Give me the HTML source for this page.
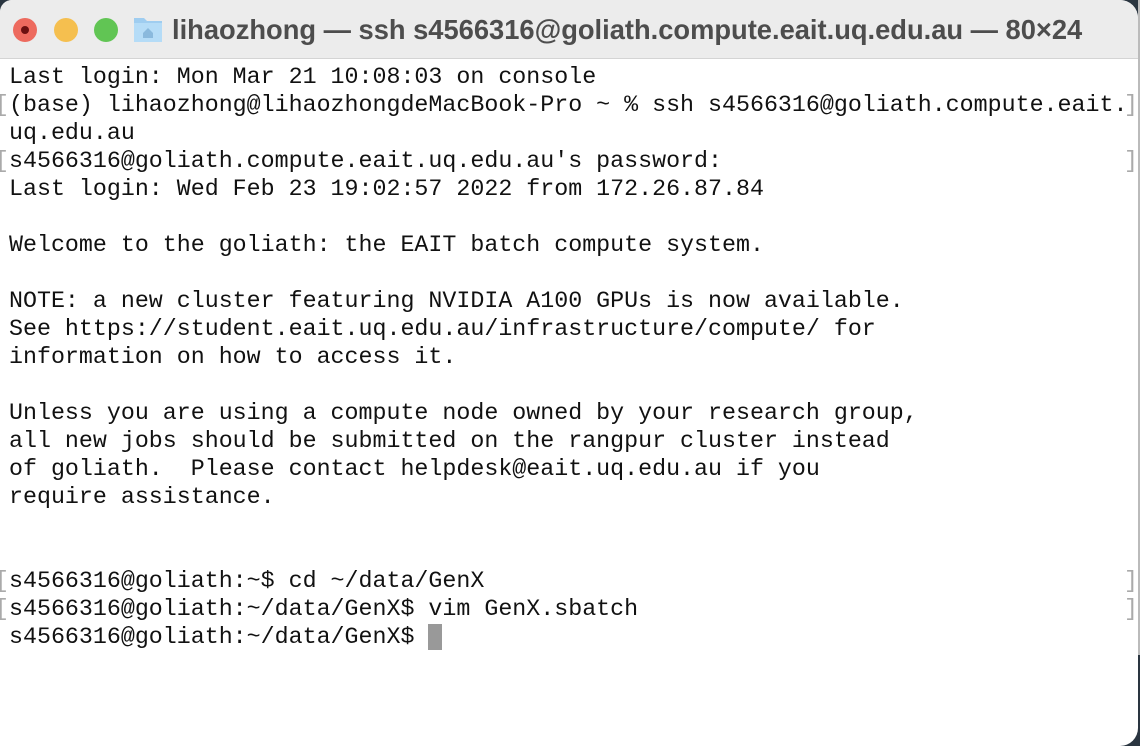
<!DOCTYPE html>
<html><head><style>
html,body{margin:0;width:1140px;height:746px;overflow:hidden;background:#2a3540;}
.win{position:absolute;left:0;top:0;width:1138px;height:746px;background:#fff;border-radius:12px 18px 18px 0;overflow:hidden;}
.bar{position:absolute;left:0;top:0;right:0;height:58px;background:#ececec;border-bottom:1px solid #d4d4d4;}
.dot{position:absolute;top:18px;width:24px;height:24px;border-radius:50%;}
.title{position:absolute;left:172px;top:14px;font:bold 27.3px "Liberation Sans",sans-serif;color:#4d4d4d;white-space:nowrap;}
pre{position:absolute;left:9px;top:63px;margin:0;font:23.3px/28px "Liberation Mono",monospace;color:#111;}
.br{position:absolute;font:23.3px/28px "Liberation Mono",monospace;color:#aaa;}
.cur{position:absolute;left:428px;top:624px;width:14px;height:26px;background:#999;}
.sb{position:absolute;left:1138px;top:0;width:2px;height:655px;background:#bbb;}
</style></head><body>
<div class="sb"></div>
<div class="win">
<div class="bar">
<div class="dot" style="left:13px;background:#ed6a5e;border:0"><div style="position:absolute;left:8px;top:8px;width:8px;height:8px;border-radius:50%;background:#6b1010"></div></div>
<div class="dot" style="left:54px;background:#f5bf4f"></div>
<div class="dot" style="left:94px;background:#61c554"></div>
<svg style="position:absolute;left:133px;top:15px" width="30" height="28" viewBox="0 0 30 28"><path d="M1 3h10l3 3h15v21H1z" fill="#9fcdf0"/><path d="M1 8h28v19H1z" fill="#b5dcf7"/><path d="M10 18l5-5 5 5v5h-10z" fill="#8ab9dd"/></svg>
<div class="title">lihaozhong — ssh s4566316@goliath.compute.eait.uq.edu.au — 80×24</div>
</div>
<pre>Last login: Mon Mar 21 10:08:03 on console
(base) lihaozhong@lihaozhongdeMacBook-Pro ~ % ssh s4566316@goliath.compute.eait.
uq.edu.au
s4566316@goliath.compute.eait.uq.edu.au's password:
Last login: Wed Feb 23 19:02:57 2022 from 172.26.87.84

Welcome to the goliath: the EAIT batch compute system.

NOTE: a new cluster featuring NVIDIA A100 GPUs is now available.
See https://student.eait.uq.edu.au/infrastructure/compute/ for
information on how to access it.

Unless you are using a compute node owned by your research group,
all new jobs should be submitted on the rangpur cluster instead
of goliath.  Please contact helpdesk@eait.uq.edu.au if you
require assistance.


s4566316@goliath:~$ cd ~/data/GenX
s4566316@goliath:~/data/GenX$ vim GenX.sbatch
s4566316@goliath:~/data/GenX$ </pre>
<div class="br" style="left:-5px;top:91px">[</div>
<div class="br" style="left:-5px;top:147px">[</div>
<div class="br" style="left:-5px;top:567px">[</div>
<div class="br" style="left:-5px;top:595px">[</div>
<div class="br" style="left:1124px;top:91px">]</div>
<div class="br" style="left:1124px;top:147px">]</div>
<div class="br" style="left:1124px;top:567px">]</div>
<div class="br" style="left:1124px;top:595px">]</div>
<div class="cur"></div>
</div>
</body></html>
